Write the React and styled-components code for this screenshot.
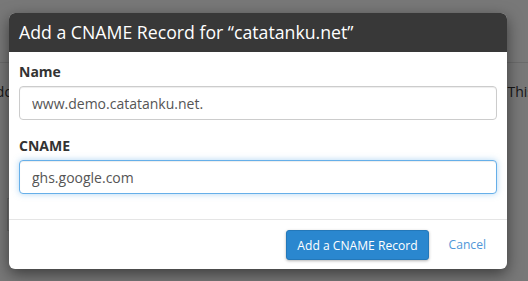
import React from "react";
import styled, { createGlobalStyle } from "styled-components";

const GlobalStyle = createGlobalStyle`
  html, body { margin: 0; padding: 0; background: #fff; }
  body { font-family: "Open Sans", "Noto Sans", sans-serif; color: #333; }
  * { box-sizing: border-box; }
`;

const Page = styled.div`
  position: relative;
  width: 528px;
  height: 281px;
  overflow: hidden;
  background: #fff;
`;

const TopBar = styled.div`
  height: 63px;
  border-bottom: 1px solid #e3e3e3;
`;

const TextRow = styled.div`
  display: flex;
  justify-content: space-between;
  margin-top: 19px;
  font-size: 14px;
  line-height: 20px;
  color: #333;
  white-space: nowrap;
`;

const LeftText = styled.span`
  margin-left: -13px;
`;

const RightText = styled.span`
  margin-right: -6px;
`;

const TableBox = styled.div`
  margin: 96px 0 0 7px;
  width: 480px;
  height: 33px;
  border: 1px solid #ddd;
`;

const Overlay = styled.div`
  position: absolute;
  inset: 0;
  background: rgba(0, 0, 0, 0.53);
`;

const Modal = styled.div`
  position: absolute;
  left: 9px;
  top: 13px;
  width: 498px;
  height: 256px;
  background: #fff;
  border-radius: 6px;
  overflow: hidden;
  box-shadow: 0 5px 15px rgba(0, 0, 0, 0.5);
  display: flex;
  flex-direction: column;
`;

const Header = styled.div`
  height: 39px;
  flex: none;
  background: #383838;
  color: #fff;
  font-size: 17.7px;
  line-height: 39px;
  padding: 0 10px;
  white-space: nowrap;
`;

const Body = styled.div`
  flex: none;
  padding: 10px 10px 0 10px;
  height: 168px;
  border-bottom: 1px solid #e5e5e5;
`;

const Group = styled.div`
  margin-bottom: ${(p) => p.$mb || 0}px;
`;

const Label = styled.label`
  display: block;
  font-weight: 700;
  font-size: 14px;
  line-height: 20px;
  margin-bottom: 4px;
  color: #333;
`;

const Input = styled.input`
  display: block;
  width: 478px;
  height: 34px;
  padding: 6px 12px;
  font-family: inherit;
  font-size: 14px;
  color: #555;
  background: #fff;
  border: 1px solid ${(p) => (p.$focus ? "#66afe9" : "#ccc")};
  border-radius: 4px;
  outline: none;
  box-shadow: ${(p) =>
    p.$focus
      ? "inset 0 1px 1px rgba(0,0,0,.075), 0 0 6px rgba(102,175,233,.5)"
      : "inset 0 1px 1px rgba(0,0,0,.075)"};
`;

const Footer = styled.div`
  flex: 1;
  display: flex;
  justify-content: flex-end;
  align-items: flex-start;
  padding: 10px 21px 0 0;
  gap: 20px;
`;

const PrimaryButton = styled.button`
  height: 30px;
  padding: 0 10px;
  font-family: inherit;
  font-size: 12.1px;
  color: #fff;
  background: #2a87cf;
  border: 1px solid #2478b9;
  border-radius: 3px;
  box-shadow: 0 1px 3px rgba(0, 0, 0, 0.3);
  cursor: pointer;
`;

const LinkButton = styled.a`
  font-size: 12.1px;
  line-height: 30px;
  color: #4f97d8;
  text-decoration: none;
`;

export default function App() {
  return (
    <>
      <GlobalStyle />
      <Page>
        <TopBar />
        <TextRow>
          <LeftText>Add</LeftText>
          <RightText>This</RightText>
        </TextRow>
        <TableBox />
        <Overlay />
        <Modal>
          <Header>Add a CNAME Record for “catatanku.net”</Header>
          <Body>
            <Group $mb={16}>
              <Label>Name</Label>
              <Input defaultValue="www.demo.catatanku.net." />
            </Group>
            <Group>
              <Label>CNAME</Label>
              <Input $focus defaultValue="ghs.google.com" />
            </Group>
          </Body>
          <Footer>
            <PrimaryButton>Add a CNAME Record</PrimaryButton>
            <LinkButton href="#">Cancel</LinkButton>
          </Footer>
        </Modal>
      </Page>
    </>
  );
}
